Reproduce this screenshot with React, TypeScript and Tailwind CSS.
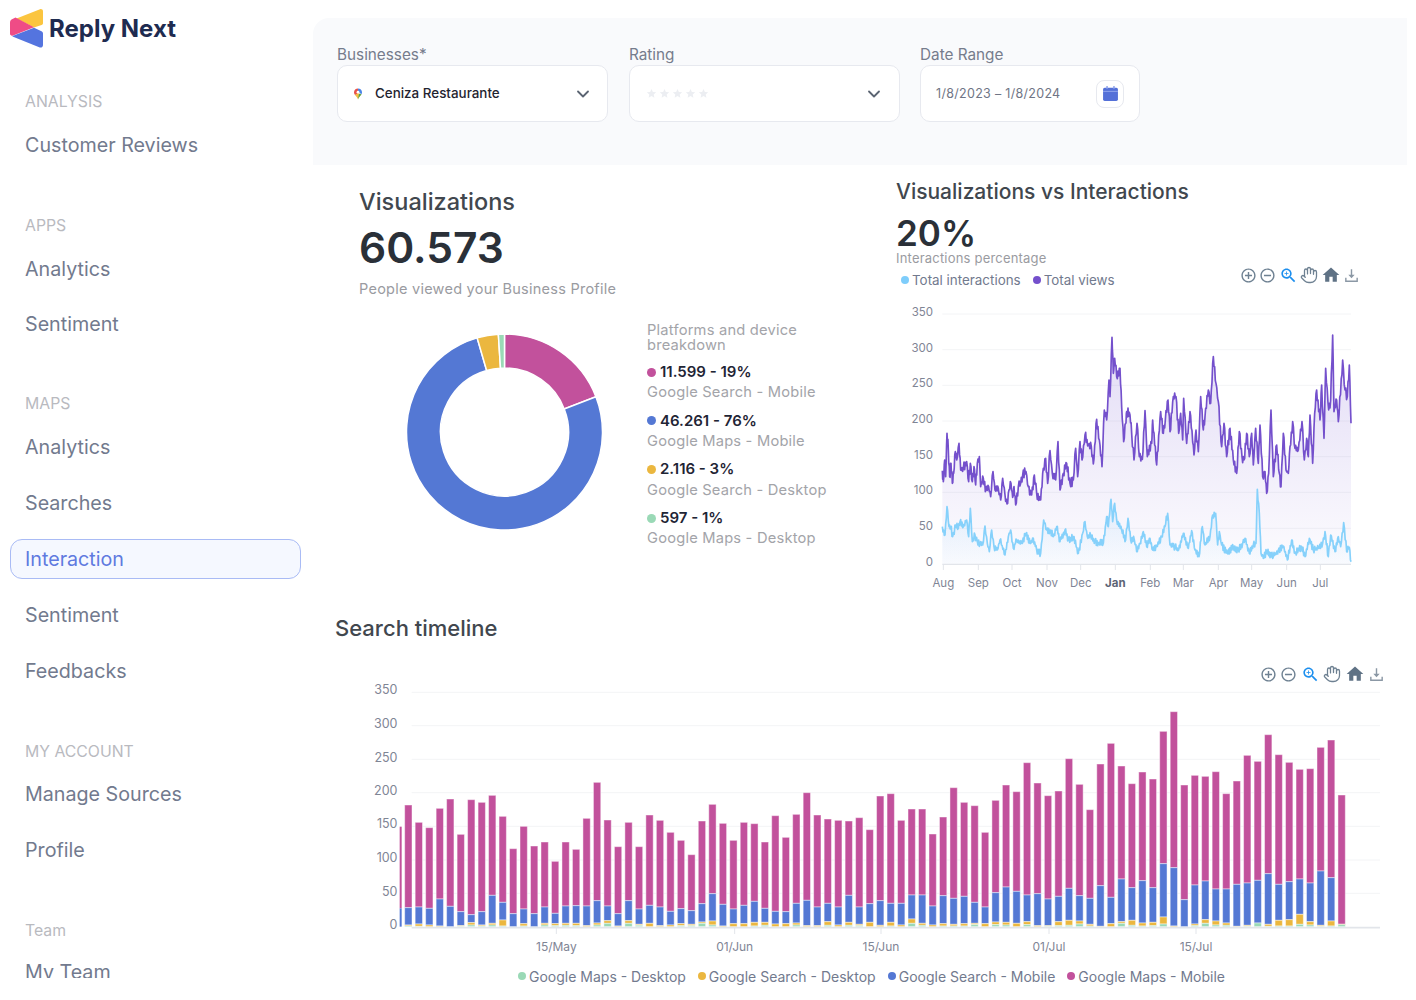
import { ChevronDown, Hand } from "lucide-react";

const purple = "157,632 160,665 164,600 167,650 171,520 175,570 179,650 183,610 187,670 191,640 196,575 200,600 207,550 212,630 220,625 230,605 236,665 241,610 247,665 252,620 257,675 262,610 268,590 272,680 280,655 288,690 296,680 302,710 309,635 315,690 325,685 332,720 338,655 345,705 351,732 357,690 363,670 368,712 372,680 377,735 385,680 392,670 398,645 408,635 415,680 425,705 433,645 440,700 452,720 460,625 467,595 473,670 480,572 487,640 497,660 504,545 510,690 520,640 530,610 540,670 550,660 557,565 563,650 570,545 576,600 585,525 595,555 604,560 610,612 620,478 628,540 636,620 643,450 650,480 657,360 660,410 666,232 670,340 674,295 680,350 690,325 695,440 701,545 707,490 710,455 720,465 725,520 732,600 741,490 748,590 757,598 765,452 772,590 785,550 788,480 800,615 812,455 820,520 826,480 834,420 840,515 850,410 858,410 866,520 872,460 878,540 881,415 890,550 900,455 912,585 918,510 925,575 932,410 940,510 945,470 955,390 962,430 970,290 978,370 985,425 995,560 1002,490 1010,590 1020,505 1030,600 1040,640 1048,515 1056,590 1062,600 1070,520 1078,590 1085,520 1090,615 1097,505 1105,610 1110,495 1118,650 1125,635 1130,700 1136,640 1143,450 1150,650 1160,555 1168,640 1173,680 1180,520 1188,630 1195,640 1200,560 1208,485 1215,565 1225,570 1236,485 1243,600 1250,535 1255,590 1260,465 1268,610 1274,460 1280,390 1290,480 1295,375 1302,535 1307,325 1316,450 1322,420 1328,225 1332,455 1340,420 1345,485 1358,300 1365,390 1372,410 1378,315 1383,490";
const sky = "157,800 165,825 171,740 177,800 182,800 188,830 197,795 205,805 210,785 220,800 230,780 236,830 241,745 247,845 255,825 262,845 270,850 278,855 285,798 292,850 298,875 305,810 312,860 322,870 330,840 345,885 355,830 362,810 370,865 380,840 395,850 408,820 420,850 430,835 440,870 452,880 461,780 470,810 480,810 490,830 500,800 510,845 525,810 535,840 550,830 565,880 578,820 585,785 592,830 602,825 615,845 625,850 640,850 650,770 655,800 663,718 668,785 674,730 680,780 695,810 707,840 714,775 722,840 733,840 740,875 750,850 760,815 770,860 780,835 788,870 800,860 815,830 825,800 833,760 840,855 855,860 866,870 880,820 895,865 905,812 915,870 927,890 937,800 945,855 960,830 968,765 977,760 983,855 988,815 995,855 1012,880 1030,860 1045,870 1058,850 1065,835 1078,880 1090,855 1098,850 1102,688 1108,760 1113,880 1120,895 1130,875 1150,890 1165,870 1180,858 1192,900 1205,840 1215,880 1235,860 1245,890 1258,835 1270,870 1285,865 1298,850 1305,815 1315,890 1322,825 1335,875 1345,830 1352,860 1361,788 1370,875 1378,862 1383,905";

function noisy(src: string, amp: number) {
  const pts = src.split(" ").map((p) => p.split(",").map(Number));
  const out: string[] = [];
  let k = 0;
  pts.forEach((p, i) => {
    out.push(`${p[0]},${p[1]}`);
    const q = pts[i + 1];
    if (!q) return;
    const n = Math.max(3, Math.floor((q[0] - p[0]) / 2));
    for (let j = 1; j < n; j++) {
      k++;
      const t = j / n;
      const s = Math.sin(k * 12.9898) * 43758.5453;
      const r = s - Math.floor(s);
      const y = p[1] + (q[1] - p[1]) * t + (k % 2 ? 1 : -1) * amp * (0.2 + r);
      out.push(`${(p[0] + (q[0] - p[0]) * t).toFixed(1)},${y.toFixed(0)}`);
    }
  });
  return out.join(" ");
}

const tops = [435,487,503,445,417,523,419,427,406,469,566,499,558,546,604,546,568,475,367,480,560,487,560,465,481,517,541,584,483,433,490,541,487,491,546,467,532,463,398,465,477,481,483,473,509,408,401,481,447,447,522,471,383,427,437,517,421,375,395,308,369,407,393,296,373,449,312,250,318,371,336,357,214,155,375,346,349,335,401,363,286,304,224,284,307,328,326,262,240,405];
const blues = [743,741,745,717,739,755,764,755,706,727,761,747,761,741,760,738,737,738,722,738,761,722,747,736,741,754,746,752,731,701,733,747,736,724,745,754,755,730,721,741,730,741,706,741,731,722,730,730,705,705,738,707,715,709,727,741,698,681,694,705,701,717,709,685,707,715,677,712,657,683,662,683,611,623,719,675,663,687,687,673,669,661,641,673,665,657,669,633,653,794];
const yellows = [795,792,795,798,800,797,788,795,790,780,800,791,800,790,791,790,790,797,789,782,798,782,793,790,797,795,791,793,786,783,798,791,791,787,787,792,791,789,797,797,785,795,787,793,787,796,787,795,777,790,795,791,793,791,790,791,786,787,790,785,797,797,785,781,783,793,799,791,785,781,789,787,771,798,800,792,779,783,789,799,796,789,793,781,779,763,785,796,783,792];
const greens = [798,799,800,800,800,799,795,798,795,798,800,798,800,795,797,796,797,800,795,790,800,790,796,800,800,800,797,797,790,795,800,800,800,798,796,800,800,795,800,800,796,800,796,797,800,800,798,800,790,796,800,798,798,798,794,800,794,795,800,794,800,799,797,796,792,798,800,800,790,796,798,797,792,800,800,797,790,795,796,800,799,789,799,798,798,793,795,799,798,794];

function Toolbar({ className }: { className: string }) {
  return (
    <div className={className}>
      <svg viewBox="0 0 24 24" className="w-[17px] h-[17px] fill-[#6e8192]"><path d="M13 7h-2v4H7v2h4v4h2v-4h4v-2h-4V7zm-1-5C6.48 2 2 6.48 2 12s4.48 10 10 10 10-4.48 10-10S17.52 2 12 2zm0 18c-4.41 0-8-3.59-8-8s3.59-8 8-8 8 3.59 8 8-3.59 8-8 8z" /></svg>
      <svg viewBox="0 0 24 24" className="w-[17px] h-[17px] fill-[#6e8192]"><path d="M7 11v2h10v-2H7zm5-9C6.48 2 2 6.48 2 12s4.48 10 10 10 10-4.48 10-10S17.52 2 12 2zm0 18c-4.41 0-8-3.59-8-8s3.59-8 8-8 8 3.59 8 8-3.59 8-8 8z" /></svg>
      <svg viewBox="0 0 24 24" className="w-[19px] h-[19px] fill-[#1d8fee]"><path d="M15.5 14h-.79l-.28-.27C15.41 12.59 16 11.11 16 9.5 16 5.91 13.09 3 9.5 3S3 5.91 3 9.5 5.91 16 9.5 16c1.61 0 3.09-.59 4.23-1.57l.27.28v.79l5 4.99L20.49 19l-4.99-5zm-6 0C7.01 14 5 11.99 5 9.5S7.01 5 9.5 5 14 7.01 14 9.5 11.99 14 9.5 14z" /><path d="M12 10h-2v2H9v-2H7V9h2V7h1v2h2v1z" /></svg>
      <Hand size={18} strokeWidth={1.7} className="text-[#6e8192]" />
      <svg viewBox="0 0 24 24" className="w-[20px] h-[20px] fill-[#5f7285]"><path d="M10 20v-6h4v6h5v-8h3L12 3 2 12h3v8z" /></svg>
      <svg viewBox="0 0 24 24" className="w-[17px] h-[17px] fill-[#8b98a5]"><path d="M11 3h2v8h3.5L12 16l-4.500-5H11z" /><path d="M3 15h2v4h14v-4h2v6H3z" /></svg>
    </div>
  );
}

function polar(r: number, deg: number) {
  const a = ((deg - 90) * Math.PI) / 180;
  return `${(100.5 + r * Math.cos(a)).toFixed(2)} ${(100 + r * Math.sin(a)).toFixed(2)}`;
}
function slice(a: number, b: number) {
  const large = b - a > 180 ? 1 : 0;
  return `M${polar(98, a)}A98 98 0 ${large} 1 ${polar(98, b)}L${polar(64, b)}A64 64 0 ${large} 0 ${polar(64, a)}Z`;
}

function Donut() {
  return (
    <svg width="200" height="200" viewBox="0 0 200 200" className="shrink-0 mt-[12px]">
      <path d={slice(0, 68.9)} fill="#c2519c" stroke="#fff" strokeWidth="1.5" />
      <path d={slice(68.9, 343.8)} fill="#5478d4" stroke="#fff" strokeWidth="1.5" />
      <path d={slice(343.8, 356.4)} fill="#ebb73f" stroke="#fff" strokeWidth="1.5" />
      <path d={slice(356.4, 360)} fill="#9ad9b6" stroke="#fff" strokeWidth="1.5" />
    </svg>
  );
}

function LineChart() {
  const purpleLine = noisy(purple, 13);
  const skyLine = noisy(sky, 9);
  const gy = [162, 269, 376, 483, 590, 697, 805];
  const ylab = ["350", "300", "250", "200", "150", "100", "50", "0"];
  const yy = [162, 269, 376, 483, 590, 697, 805, 912];
  const months: [string, number][] = [["Aug",160],["Sep",265],["Oct",366],["Nov",471],["Dec",572],["Jan",676],["Feb",781],["Mar",880],["Apr",985],["May",1085],["Jun",1190],["Jul",1291]];
  return (
    <svg width="480" height="300" viewBox="0 0 480 300" className="block">
      <defs>
        <linearGradient id="gp" x1="0" y1="0" x2="0" y2="1">
          <stop offset="0" stopColor="#6f4fcf" stopOpacity="0.2" />
          <stop offset="1" stopColor="#6f4fcf" stopOpacity="0.02" />
        </linearGradient>
        <linearGradient id="gs" x1="0" y1="0" x2="0" y2="1">
          <stop offset="0" stopColor="#7ecbfa" stopOpacity="0.2" />
          <stop offset="1" stopColor="#7ecbfa" stopOpacity="0.03" />
        </linearGradient>
      </defs>
      <g transform="translate(-6 -35) scale(0.33333)">
        {gy.map((y) => (
          <line key={y} x1="157" x2="1383" y1={y} y2={y} stroke="#f3f4f6" strokeWidth="3" />
        ))}
        <polygon points={`157,912 ${purpleLine} 1383,912`} fill="url(#gp)" />
        <polygon points={`157,912 ${skyLine} 1383,912`} fill="url(#gs)" />
        <polyline points={purpleLine} fill="none" stroke="#7450cc" strokeWidth="5" strokeLinejoin="round" />
        <polyline points={skyLine} fill="none" stroke="#86d1fb" strokeWidth="5" strokeLinejoin="round" />
        <line x1="157" x2="1383" y1="913" y2="913" stroke="#e2e5ea" strokeWidth="4" />
        {months.map(([m, x]) => (
          <line key={m} x1={x} x2={x} y1="913" y2="930" stroke="#e2e5ea" strokeWidth="3" />
        ))}
      </g>
      {ylab.map((l, i) => (
        <text key={l} x="37" y={(yy[i] - 105) / 3 + 2} textAnchor="end" fontSize="11.5" fill="#7f8595">{l}</text>
      ))}
      {months.map(([m, x]) => (
        <text key={m} x={x / 3 - 6} y="292" textAnchor="middle" fontSize="11.5" fontWeight={m === "Jan" ? 700 : 400} fill={m === "Jan" ? "#5d6475" : "#7f8595"}>{m}</text>
      ))}
    </svg>
  );
}

function BarChart() {
  const gy = [97, 197, 298, 398, 499, 600, 700];
  const yy = [89, 191, 291, 391, 491, 593, 693, 794];
  const ylab = ["350", "300", "250", "200", "150", "100", "50", "0"];
  const ticks: [string, number][] = [["15/May",589],["01/Jun",1124],["15/Jun",1563],["01/Jul",2067],["15/Jul",2508]];
  const edge = { stroke: "#fff", strokeOpacity: 0.45, strokeWidth: 3 };
  return (
    <svg width="1047" height="278" viewBox="0 0 1047 278" className="block">
      <g transform="translate(0 -24) scale(0.33333)">
        {gy.map((y) => (
          <line key={y} x1="155" x2="3060" y1={y} y2={y} stroke="#f3f4f6" strokeWidth="3" />
        ))}
        <rect x="119" y="500" width="6" height="245" fill="#c2519c" />
        <rect x="119" y="745" width="6" height="55" fill="#5478d4" />
        {tops.map((t, i) => {
          const x = 134 + i * 31.46;
          const w = 22;
          return (
            <g key={i} {...edge}>
              <rect x={x} y={t} width={w} height={blues[i] - t} fill="#c2519c" />
              <rect x={x} y={blues[i]} width={w} height={Math.max(yellows[i] - blues[i], 0)} fill="#5478d4" />
              {yellows[i] < 800 && <rect x={x} y={yellows[i]} width={w} height={Math.max(greens[i] - yellows[i], 0)} fill="#ebb73f" />}
              {greens[i] < 800 && <rect x={x} y={greens[i]} width={w} height={800 - greens[i]} fill="#9ad9b6" />}
            </g>
          );
        })}
        <line x1="155" x2="3060" y1="803" y2="803" stroke="#e2e5ea" strokeWidth="5" />
        {ticks.map(([l, x]) => (
          <line key={l} x1={x} x2={x} y1="803" y2="822" stroke="#e2e5ea" strokeWidth="3" />
        ))}
      </g>
      {ylab.map((l, i) => (
        <text key={l} x="37.5" y={yy[i] / 3 - 24 + 4.5} textAnchor="end" fontSize="12.5" fill="#7f8595">{l}</text>
      ))}
      {ticks.map(([l, x]) => (
        <text key={l} x={x / 3} y={267} textAnchor="middle" fontSize="12" fill="#7f8595">{l}</text>
      ))}
    </svg>
  );
}

function NavItem({ label, active }: { label: string; active?: boolean }) {
  return (
    <div
      className={
        active
          ? "h-10 w-[291px] flex items-center pl-[14px] pt-[2px] rounded-xl border border-[#a9bbf5] bg-[#f5f8ff] text-[#5f7ae0] text-[19.7px]"
          : "h-10 w-[291px] flex items-center pl-[15px] pt-[2px] text-[#727a8e] text-[19.7px]"
      }
    >
      {label}
    </div>
  );
}

function Head({ label }: { label: string }) {
  return <div className="h-6 flex items-center pl-[15px] pt-[2px] text-[15.8px] text-[#b9babf]">{label}</div>;
}

function Sidebar() {
  return (
    <aside className="w-[313px] shrink-0 h-[978px] overflow-hidden pl-[10px] pt-[8px]">
      <div className="h-10 flex items-center gap-[6px]">
        <svg width="33" height="40" viewBox="0 0 33 40" className="shrink-0">
          <path d="M6.5 10.5 30 1.2c1.4-.5 3 .4 3 2V15c0 1-.5 1.700-1.400 2L24 19.500Z" fill="#fbc53f" />
          <path d="M0 14.500c0-1.500.8-2.700 2-3.300l3.500-1.600L24 19.200 2.500 27.700C1 28 0 27 0 25.500Z" fill="#ef4c86" />
          <path d="M2.500 28 24 19.800l7.500 3.500c1 .5 1.500 1.300 1.500 2.400V37c0 1.800-1.600 3-3.200 2.500L2.500 28.500Z" fill="#5474df" />
        </svg>
        <span className="mt-[2px] text-[24px] font-bold text-[#1e2b50] leading-10">Reply Next</span>
      </div>
      <div className="flex flex-col mt-[41px]">
        <Head label="ANALYSIS" />
        <div className="mt-3"><NavItem label="Customer Reviews" /></div>
        <div className="mt-12"><Head label="APPS" /></div>
        <div className="mt-3 flex flex-col gap-[15px]">
          <NavItem label="Analytics" />
          <NavItem label="Sentiment" />
        </div>
        <div className="mt-[47px]"><Head label="MAPS" /></div>
        <div className="mt-3 flex flex-col gap-4">
          <NavItem label="Analytics" />
          <NavItem label="Searches" />
          <NavItem label="Interaction" active />
          <NavItem label="Sentiment" />
          <NavItem label="Feedbacks" />
        </div>
        <div className="mt-12"><Head label="MY ACCOUNT" /></div>
        <div className="mt-[11px] flex flex-col gap-4">
          <NavItem label="Manage Sources" />
          <NavItem label="Profile" />
        </div>
        <div className="mt-12"><Head label="Team" /></div>
        <div className="mt-[10px]"><NavItem label="My Team" /></div>
      </div>
    </aside>
  );
}

function Star() {
  return (
    <svg viewBox="0 0 24 24" className="w-[11px] h-[11px] fill-[#eceef2]"><path d="m12 2 3 6.600 7.200.8-5.400 4.800 1.500 7.100L12 17.700l-6.300 3.600 1.500-7.100L1.800 9.400 9 8.600Z" /></svg>
  );
}

function Filters() {
  const box = "h-[57px] rounded-[10px] border border-[#e7e9ef] bg-white flex items-center";
  const label = "h-5 flex items-center mt-[1px] text-[15.3px] text-[#767c8c]";
  return (
    <div className="h-[147px] rounded-tl-2xl bg-[#f9fafc] pl-[24px] pt-[26px] flex">
      <div className="w-[271px] mr-[21px]">
        <div className={label}>Businesses*</div>
        <div className={box + " pl-[15px] pr-[14px]"}>
          <svg width="10" height="12" viewBox="0 0 10 12" className="shrink-0">
            <path d="M5 .5C2.700.5 1 2.200 1 4.300c0 1 .4 1.800 1 2.600L5 6z" fill="#e8534a" />
            <path d="M5 .5c2.300 0 4 1.700 4 3.800 0 .7-.2 1.300-.5 1.900L5 4z" fill="#4a86e8" />
            <path d="M2 6.900C3 8.200 4.500 9.500 5 11.500c.4-1.900 2.300-3.700 3.500-5.300L5 5z" fill="#f2bd42" />
            <path d="M5 11.500c.4-1.900 2.300-3.700 3.500-5.300L6 6z" fill="#3fa55b" />
            <circle cx="5" cy="4.200" r="1.400" fill="#fff" />
          </svg>
          <span className="ml-[12px] text-[13.4px] font-medium text-[#1f2430] flex-1 whitespace-nowrap">Ceniza Restaurante</span>
          <ChevronDown size={20} strokeWidth={2.2} className="text-[#5b6472]" />
        </div>
      </div>
      <div className="w-[271px] mr-[20px]">
        <div className={label}>Rating</div>
        <div className={box + " pl-[16px] pr-[15px]"}>
          <div className="flex gap-[2px] flex-1"><Star /><Star /><Star /><Star /><Star /></div>
          <ChevronDown size={20} strokeWidth={2.2} className="text-[#5b6472]" />
        </div>
      </div>
      <div className="w-[220px]">
        <div className={label}>Date Range</div>
        <div className={box + " pl-[15px] pr-[15px]"}>
          <span className="flex-1 mt-[2px] text-[12.5px] text-[#6f7585] whitespace-nowrap tracking-[0.3px]">1/8/2023 – 1/8/2024</span>
          <div className="w-[28px] h-[28px] rounded-lg border border-[#e7e9ef] flex items-center justify-center">
            <svg viewBox="0 0 16 16" className="w-[17px] h-[17px]">
              <rect x="1" y="2.500" width="14" height="12.500" rx="1.500" fill="#5470d8" />
              <rect x="4" y="1" width="1.500" height="2.500" fill="#8fa3ec" />
              <rect x="10.500" y="1" width="1.500" height="2.500" fill="#8fa3ec" />
              <rect x="1" y="5.500" width="14" height="1" fill="#8fa3ec" />
            </svg>
          </div>
        </div>
      </div>
    </div>
  );
}

function LegendItem({ color, value, name }: { color: string; value: string; name: string }) {
  return (
    <div className="h-10">
      <div className="h-5 flex items-center gap-[4px] text-[15px] font-semibold text-[#1f2535]">
        <span className={"w-[9px] h-[9px] rounded-full " + color} />
        {value}
      </div>
      <div className="h-5 flex items-center text-[14.7px] text-[#a3a4a9] tracking-[0.2px]">{name}</div>
    </div>
  );
}

function BottomLegend({ color, label }: { color: string; label: string }) {
  return (
    <div className="flex items-center gap-[3px] text-[14px] text-[#727a8e]">
      <span className={"w-[8px] h-[8px] rounded-full " + color} />
      {label}
    </div>
  );
}

export default function App() {
  return (
    <div className="w-[1416px] h-[1000px] overflow-hidden bg-white flex font-[Inter,sans-serif]">
      <Sidebar />
      <main className="w-[1094px] pt-[18px] flex flex-col">
        <Filters />
        <div className="flex">
          <section className="w-[583px] pl-[46px] pt-[22px]">
            <h2 className="text-[23.5px] leading-[30px] font-medium text-[#41474e]">Visualizations</h2>
            <div className="mt-[5px] text-[42.5px] leading-[52px] font-semibold text-[#2a3038]">60.573</div>
            <p className="mt-[5px] text-[14.5px] leading-5 text-[#9a9ba1] tracking-[0.25px]">People viewed your Business Profile</p>
            <div className="mt-[21px] flex pl-[45px]">
              <Donut />
              <div className="ml-[43px] w-[200px]">
                <div className="mt-[3px] text-[14.7px] leading-[15px] text-[#a3a4a9] tracking-[0.2px]">Platforms and device breakdown</div>
                <div className="mt-[9px] flex flex-col gap-[8.8px]">
                  <LegendItem color="bg-[#c2519c]" value="11.599 - 19%" name="Google Search - Mobile" />
                  <LegendItem color="bg-[#5478d4]" value="46.261 - 76%" name="Google Maps - Mobile" />
                  <LegendItem color="bg-[#ebb73f]" value="2.116 - 3%" name="Google Search - Desktop" />
                  <LegendItem color="bg-[#9ad9b6]" value="597 - 1%" name="Google Maps - Desktop" />
                </div>
              </div>
            </div>
          </section>
          <section className="w-[511px] pt-[13px]">
            <h2 className="text-[21px] leading-7 font-medium text-[#41474e]">Visualizations vs Interactions</h2>
            <div className="mt-[9px] text-[35px] leading-9 font-semibold text-[#2a3038]">20%</div>
            <div className="text-[13px] leading-[14px] text-[#9a9ba1] tracking-[0.2px]">Interactions percentage</div>
            <div className="mt-[5px] h-5 flex items-center justify-between w-[464px] pl-[5px]">
              <div className="flex items-center gap-[12px] text-[13.4px] text-[#727a8e]">
                <span className="flex items-center gap-[3px]"><span className="w-[8px] h-[8px] rounded-full bg-[#7ecdfb]" />Total interactions</span>
                <span className="flex items-center gap-[3px]"><span className="w-[8px] h-[8px] rounded-full bg-[#7450cc]" />Total views</span>
              </div>
              <Toolbar className="flex items-center gap-[2.5px] mb-[10px]" />
            </div>
            <div className="mt-[5px]"><LineChart /></div>
          </section>
        </div>
        <h2 className="mt-[18px] pl-[22px] text-[22px] leading-[30px] font-medium text-[#41474e]">Search timeline</h2>
        <Toolbar className="mt-[21px] h-5 flex items-center justify-end gap-[3.5px] pr-[22px]" />
        <div className="pl-[47px]"><BarChart /></div>
        <div className="mt-[4px] h-5 flex items-center gap-[12px] pl-[205px]">
          <BottomLegend color="bg-[#9ad9b6]" label="Google Maps - Desktop" />
          <BottomLegend color="bg-[#ebb73f]" label="Google Search - Desktop" />
          <BottomLegend color="bg-[#5478d4]" label="Google Search - Mobile" />
          <BottomLegend color="bg-[#c2519c]" label="Google Maps - Mobile" />
        </div>
      </main>
    </div>
  );
}
